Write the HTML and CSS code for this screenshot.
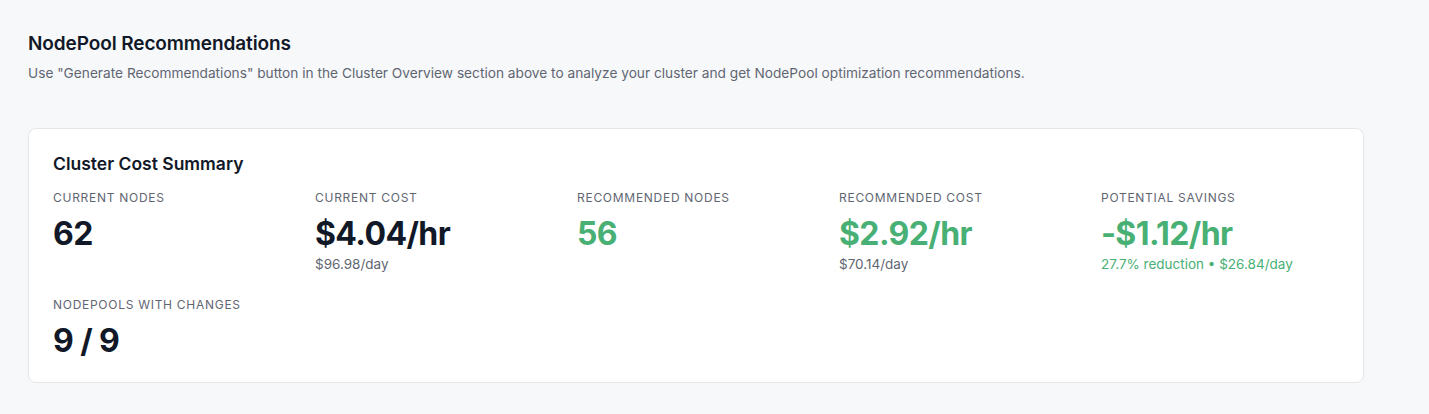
FILE: index.html
```html
<!DOCTYPE html>
<html lang="en">
<head>
<meta charset="utf-8">
<title>NodePool Recommendations</title>
<link rel="stylesheet" href="styles.css">
</head>
<body>
<main class="page">
  <header class="section-head">
    <h1 class="section-title">NodePool Recommendations</h1>
    <p class="section-desc">Use "Generate Recommendations" button in the Cluster Overview section above to analyze your cluster and get NodePool optimization recommendations.</p>
  </header>
  <section class="card">
    <h2 class="card-title">Cluster Cost Summary</h2>
    <div class="stats">
      <div class="stat">
        <div class="stat-label">Current Nodes</div>
        <div class="stat-value">62</div>
      </div>
      <div class="stat">
        <div class="stat-label">Current Cost</div>
        <div class="stat-value">$4.04/hr</div>
        <div class="stat-sub">$96.98/day</div>
      </div>
      <div class="stat">
        <div class="stat-label">Recommended Nodes</div>
        <div class="stat-value green">56</div>
      </div>
      <div class="stat">
        <div class="stat-label">Recommended Cost</div>
        <div class="stat-value green">$2.92/hr</div>
        <div class="stat-sub">$70.14/day</div>
      </div>
      <div class="stat">
        <div class="stat-label">Potential Savings</div>
        <div class="stat-value green">-$1.12/hr</div>
        <div class="stat-sub green">27.7% reduction • $26.84/day</div>
      </div>
      <div class="stat">
        <div class="stat-label">NodePools with Changes</div>
        <div class="stat-value">9 / 9</div>
      </div>
    </div>
  </section>
</main>
</body>
</html>
```

FILE: styles.css
```css
* { box-sizing: border-box; }
html, body {
  margin: 0;
  padding: 0;
  background: #f7f8fa;
  font-family: Inter, "Noto Sans", "Liberation Sans", sans-serif;
  color: #111827;
}
.page {
  padding: 32px 65px 32px 28px;
}
.section-head {
  margin-bottom: 45px;
}
.section-title {
  margin: 0;
  font-size: 19px;
  line-height: 24px;
  font-weight: 600;
  letter-spacing: -0.1px;
  color: #111827;
}
.section-desc {
  margin: 7px 0 0;
  font-size: 13.7px;
  line-height: 20px;
  color: #5f6672;
}
.card {
  background: #ffffff;
  border: 1px solid #e4e6ea;
  border-radius: 8px;
  padding: 24px 24px 21px 24px;
}
.card-title {
  margin: 0 0 15px;
  font-size: 17.5px;
  line-height: 22px;
  font-weight: 600;
  color: #111827;
}
.stats {
  display: grid;
  grid-template-columns: repeat(5, 1fr);
  column-gap: 24px;
  row-gap: 24px;
}
.stat-label {
  font-size: 12px;
  line-height: 16px;
  letter-spacing: 0.06em;
  text-transform: uppercase;
  color: #5f6672;
}
.stat-value {
  margin-top: 8px;
  font-size: 32px;
  line-height: 40px;
  font-weight: 700;
  letter-spacing: -0.6px;
  color: #111827;
}
.stat-sub {
  margin-top: 1px;
  font-size: 13.5px;
  line-height: 18px;
  color: #5f6672;
}
.green { color: #48b075; }
```
